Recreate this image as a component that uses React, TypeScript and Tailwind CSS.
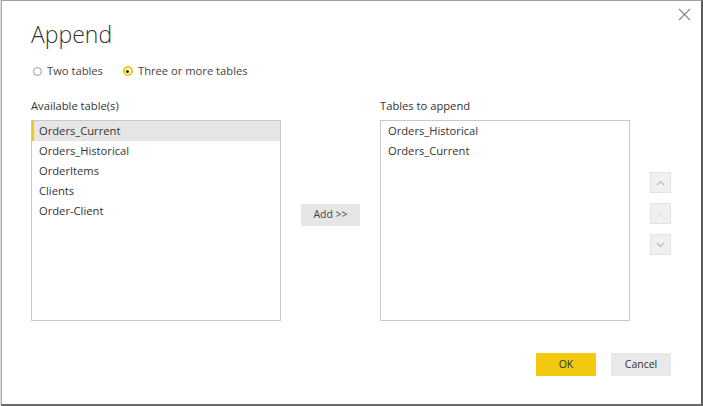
import React from "react";

const font = { fontFamily: '"Open Sans", "Noto Sans", sans-serif' };

function Radio({ checked, label }: { checked?: boolean; label: string }) {
  return (
    <label className="flex h-[16px] items-center gap-[5px] text-[11.2px] leading-[16px] text-[#444]">
      <span
        className={
          checked
            ? "flex h-[10px] w-[10px] items-center justify-center rounded-full border-2 border-[#f2c811]"
            : "h-[9px] w-[9px] rounded-full border border-[#9a9a9a]"
        }
      >
        {checked && <span className="h-[3px] w-[3px] rounded-full bg-[#222]" />}
      </span>
      {label}
    </label>
  );
}

function ListBox({ items, selected }: { items: string[]; selected?: number }) {
  return (
    <div className="h-[201px] w-[250px] border border-[#c8c8c8] bg-white">
      {items.map((item, i) => (
        <div
          key={item}
          className={
            i === selected
              ? "flex h-[20px] items-center border-l-2 border-[#f2c811] bg-[#e6e6e6] pl-[5px] text-[11.2px] leading-[20px] text-[#333]"
              : "flex h-[20px] items-center pl-[7px] text-[11.2px] leading-[20px] text-[#333]"
          }
        >
          {item}
        </div>
      ))}
    </div>
  );
}

function SideButton({ children }: { children: React.ReactNode }) {
  return (
    <div className="flex h-[21px] w-[21px] items-center justify-center border border-[#e3e3e3] bg-[#f0f0f0]">
      {children}
    </div>
  );
}

export default function App() {
  return (
    <div className="h-[406px] w-[703px] bg-[#dcdcdc]" style={font}>
      <div className="ml-[1px] flex h-[406px] w-[702px] flex-col border-t border-l border-r-[2px] border-b-[2px] border-t-[#9e9e9e] border-l-[#a8a8a8] border-r-[#5c5c5c] border-b-[#6a6a6a] bg-white">
        <div className="flex h-[49px] items-start justify-between">
          <h1 className="ml-[29px] mt-[17px] text-[23px] font-light leading-[32px] text-[#333]">Append</h1>
          <svg className="mr-[10px] mt-[7px]" width="13" height="13" viewBox="0 0 13 13">
            <path d="M1 1 L12 12 M12 1 L1 12" stroke="#8a8a8a" strokeWidth="1.2" />
          </svg>
        </div>

        <div className="ml-[31px] mt-[13px] flex h-[16px] items-center gap-[20px]">
          <Radio label="Two tables" />
          <Radio checked label="Three or more tables" />
        </div>

        <div className="mt-[19px] flex">
          <div className="ml-[29px] flex flex-col">
            <div className="mb-[7px] h-[15px] text-[11.2px] leading-[15px] text-[#333]">Available table(s)</div>
            <ListBox items={["Orders_Current", "Orders_Historical", "OrderItems", "Clients", "Order-Client"]} selected={0} />
          </div>

          <div className="flex w-[99px] items-start justify-center pt-[106px]">
            <button className="h-[22px] w-[59px] bg-[#e6e6e6] text-[10.5px] text-[#444]">Add &gt;&gt;</button>
          </div>

          <div className="flex flex-col">
            <div className="mb-[7px] h-[15px] text-[11.2px] leading-[15px] text-[#333]">Tables to append</div>
            <ListBox items={["Orders_Historical", "Orders_Current"]} />
          </div>

          <div className="ml-[20px] flex flex-col gap-[10px] pt-[74px]">
            <SideButton>
              <svg width="9" height="6" viewBox="0 0 9 6">
                <path d="M1 5 L4.5 1.5 L8 5" fill="none" stroke="#b8b8b8" strokeWidth="1.1" />
              </svg>
            </SideButton>
            <SideButton>
              <svg width="9" height="9" viewBox="0 0 9 9">
                <path d="M1 1 L8 8 M8 1 L1 8" stroke="#e6e6e6" strokeWidth="1.1" />
              </svg>
            </SideButton>
            <SideButton>
              <svg width="9" height="6" viewBox="0 0 9 6">
                <path d="M1 1 L4.5 4.5 L8 1" fill="none" stroke="#b8b8b8" strokeWidth="1.1" />
              </svg>
            </SideButton>
          </div>
        </div>

        <div className="mr-[30px] mt-[32px] flex justify-end gap-[15px]">
          <button className="h-[23px] w-[60px] bg-[#f2c811] text-[10.5px] text-[#333]">OK</button>
          <button className="h-[23px] w-[60px] bg-[#e9e9e9] text-[10.5px] text-[#333]">Cancel</button>
        </div>
      </div>
    </div>
  );
}
